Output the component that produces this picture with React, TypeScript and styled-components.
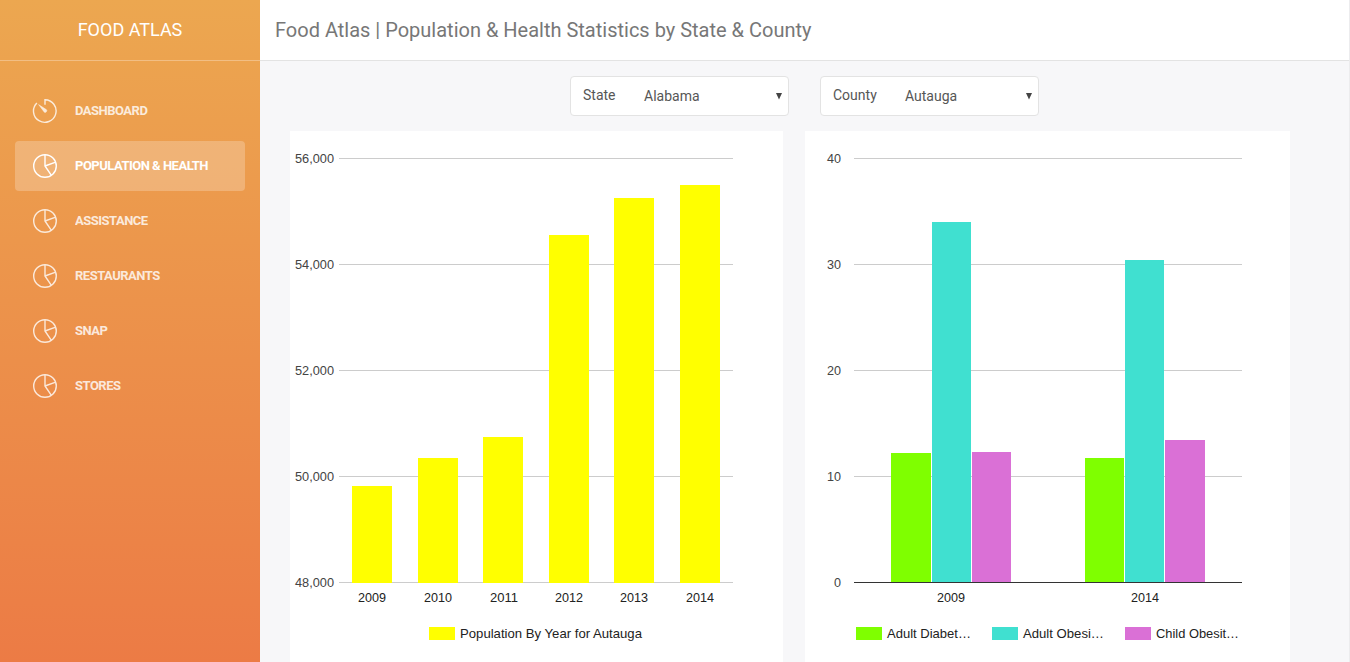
import React from "react";
import styled, { createGlobalStyle } from "styled-components";

const GlobalStyle = createGlobalStyle`
  * { box-sizing: border-box; }
  body {
    margin: 0;
    overflow: hidden;
    font-family: Roboto, "Liberation Sans", sans-serif;
    color: #565656;
  }
`;

const Page = styled.div`
  display: flex;
  width: 1350px;
  height: 662px;
  overflow: hidden;
`;

const Sidebar = styled.aside`
  width: 260px;
  flex: none;
  background: linear-gradient(to bottom, #eca750 0%, #ec7b45 100%);
`;

const Brand = styled.div`
  height: 61px;
  border-bottom: 1px solid rgba(255, 255, 255, 0.3);
  color: #fff;
  font-size: 18px;
  line-height: 60px;
  text-align: center;
`;

const Nav = styled.nav`
  display: flex;
  flex-direction: column;
  gap: 5px;
  padding: 25px 15px 0;
`;

const NavItem = styled.a<{ $active?: boolean }>`
  display: flex;
  align-items: center;
  height: 50px;
  padding-left: 17px;
  border-radius: 4px;
  background: ${(p) => (p.$active ? "rgba(255, 255, 255, 0.23)" : "transparent")};
  color: #fff;
`;

const NavIcon = styled.svg<{ $active?: boolean }>`
  width: 26px;
  height: 26px;
  margin-right: 17px;
  fill: none;
  stroke: #fff;
  stroke-width: 1.4;
  opacity: ${(p) => (p.$active ? 1 : 0.8)};
`;

const NavLabel = styled.span<{ $active?: boolean }>`
  font-size: 13px;
  font-weight: 700;
  line-height: 30px;
  white-space: nowrap;
  letter-spacing: -0.5px;
  opacity: ${(p) => (p.$active ? 1 : 0.8)};
`;

const Main = styled.main`
  flex: 1;
  background: #f7f7f9;
  border-right: 1px solid #ececee;
`;

const Header = styled.header`
  height: 61px;
  padding-left: 15px;
  background: #fff;
  border-bottom: 1px solid #e3e3e3;
`;

const Title = styled.h1`
  margin: 0;
  color: #777;
  font-size: 20px;
  font-weight: 400;
  line-height: 60px;
`;

const Filters = styled.div`
  display: flex;
  gap: 31px;
  padding: 15px 0 15px 310px;
`;

const SelectBox = styled.div`
  display: flex;
  width: 219px;
  height: 40px;
  padding: 0 5px 0 12px;
  background: #fff;
  border: 1px solid #e3e3e3;
  border-radius: 4px;
  font-size: 14px;
  line-height: 36px;
`;

const SelectLabel = styled.span<{ $width: number }>`
  width: ${(p) => p.$width}px;
`;

const SelectValue = styled.span`
  flex: 1;
  padding-top: 1px;
`;

const Arrow = styled.svg`
  width: 8px;
  height: 38px;
  fill: #444;
`;

const Charts = styled.div`
  display: flex;
  gap: 22px;
  padding-left: 30px;
`;

const Card = styled.section<{ $width: number }>`
  width: ${(p) => p.$width}px;
  height: 531px;
  background: #fff;
`;

const Plot = styled.svg`
  display: block;
  font-family: "Liberation Sans", Arial, sans-serif;
  font-size: 13.6px;
`;

const Gauge = () => (
  <>
    <path d="M4.9 4.9A11.3 11.3 0 1 0 13 1.7V6.8" />
    <path d="M6.6 6.6L14.3 11.6a1.5 1.5 0 0 1-2.2 2.3z" fill="#fff" stroke="#fff" strokeWidth={0.5} />
  </>
);

const Pie = () => (
  <>
    <circle cx="13" cy="13" r="11.3" />
    <path d="M13 1.7V13l6.4 9.4M13 13l10.7-3.9" />
  </>
);

const navItems = [
  { label: "DASHBOARD" },
  { label: "POPULATION & HEALTH", active: true },
  { label: "ASSISTANCE" },
  { label: "RESTAURANTS" },
  { label: "SNAP" },
  { label: "STORES" },
];

type Bar = { x: number; w: number; top: number; color: string };
type Label = { x: number; text: string };
type LegendEntry = { x: number; text: string; color: string; width: number };

type ChartProps = {
  width: number;
  ticks: string[];
  tickEnd: number;
  from: number;
  to: number;
  bars: Bar[];
  bottom: number;
  labels: Label[];
  legend: LegendEntry[];
  baseline: string;
};

// Digits advance 7px each and the thousands separator 4px.
const numberWidth = (text: string) =>
  text.split("").reduce((sum, ch) => sum + (ch === "," ? 4 : 7), 0);

const BarChart = ({ width, ticks, tickEnd, from, to, bars, bottom, labels, legend, baseline }: ChartProps) => (
  <Plot width={width} height={531}>
    {ticks.map((t, i) => (
      <g key={t}>
        <rect x={from} y={27 + i * 106} width={to - from} height={1} fill="#ccc" />
        <text
          x={tickEnd - numberWidth(t)}
          y={32 + i * 106}
          fill="#444"
          textLength={numberWidth(t)}
          lengthAdjust="spacingAndGlyphs"
        >
          {t}
        </text>
      </g>
    ))}
    {bars.map((b) => (
      <rect key={b.x} x={b.x} y={b.top} width={b.w} height={bottom - b.top} fill={b.color} />
    ))}
    {baseline && <rect x={from} y={451} width={to - from} height={1} fill={baseline} />}
    {labels.map((l) => (
      <text
        key={l.text}
        x={l.x - 14}
        y={471}
        fill="#222"
        textLength={28}
        lengthAdjust="spacingAndGlyphs"
      >
        {l.text}
      </text>
    ))}
    {legend.map((l) => (
      <g key={l.text}>
        <rect x={l.x} y={496} width={26} height={13} fill={l.color} />
        <text x={l.x + 31} y={507} fill="#222" textLength={l.width} lengthAdjust="spacingAndGlyphs">
          {l.text}
        </text>
      </g>
    ))}
  </Plot>
);

const YELLOW = "#ffff00";
const GREEN = "#7fff00";
const TURQUOISE = "#40e0d0";
const ORCHID = "#da70d6";

const populationBars: Bar[] = [
  { x: 62, w: 40, top: 355, color: YELLOW },
  { x: 128, w: 40, top: 327, color: YELLOW },
  { x: 193, w: 40, top: 306, color: YELLOW },
  { x: 259, w: 40, top: 104, color: YELLOW },
  { x: 324, w: 40, top: 67, color: YELLOW },
  { x: 390, w: 40, top: 54, color: YELLOW },
];

const healthBars: Bar[] = [
  { x: 86, w: 40, top: 322, color: GREEN },
  { x: 127, w: 39, top: 91, color: TURQUOISE },
  { x: 167, w: 39, top: 321, color: ORCHID },
  { x: 280, w: 39, top: 327, color: GREEN },
  { x: 320, w: 39, top: 129, color: TURQUOISE },
  { x: 360, w: 40, top: 309, color: ORCHID },
];

const Select = ({ label, value, labelWidth }: { label: string; value: string; labelWidth: number }) => (
  <SelectBox>
    <SelectLabel $width={labelWidth}>{label}</SelectLabel>
    <SelectValue>{value}</SelectValue>
    <Arrow viewBox="0 0 8 38"><path d="M1 16h6l-3 6.5z" /></Arrow>
  </SelectBox>
);

export default function App() {
  return (
    <Page>
      <GlobalStyle />
      <Sidebar>
        <Brand>FOOD ATLAS</Brand>
        <Nav>
          {navItems.map((item, i) => (
            <NavItem key={item.label} $active={item.active}>
              <NavIcon viewBox="0 0 26 26" $active={item.active}>{i === 0 ? <Gauge /> : <Pie />}</NavIcon>
              <NavLabel $active={item.active}>{item.label}</NavLabel>
            </NavItem>
          ))}
        </Nav>
      </Sidebar>
      <Main>
        <Header>
          <Title>Food Atlas | Population &amp; Health Statistics by State &amp; County</Title>
        </Header>
        <Filters>
          <Select label="State" value="Alabama" labelWidth={61} />
          <Select label="County" value="Autauga" labelWidth={72} />
        </Filters>
        <Charts>
          <Card $width={493}>
            <BarChart
              width={493}
              ticks={["56,000", "54,000", "52,000", "50,000", "48,000"]}
              tickEnd={44}
              from={49}
              to={443}
              bars={populationBars}
              bottom={452}
              baseline=""
              labels={[
                { x: 82, text: "2009" },
                { x: 148, text: "2010" },
                { x: 214, text: "2011" },
                { x: 279, text: "2012" },
                { x: 344, text: "2013" },
                { x: 410, text: "2014" },
              ]}
              legend={[{ x: 139, text: "Population By Year for Autauga", color: YELLOW, width: 182 }]}
            />
          </Card>
          <Card $width={485}>
            <BarChart
              width={485}
              ticks={["40", "30", "20", "10", "0"]}
              tickEnd={36}
              from={49}
              to={437}
              bars={healthBars}
              bottom={451}
              baseline="#333"
              labels={[
                { x: 146, text: "2009" },
                { x: 340, text: "2014" },
              ]}
              legend={[
                { x: 51, text: "Adult Diabet…", color: GREEN, width: 84 },
                { x: 187, text: "Adult Obesi…", color: TURQUOISE, width: 81 },
                { x: 320, text: "Child Obesit…", color: ORCHID, width: 83 },
              ]}
            />
          </Card>
        </Charts>
      </Main>
    </Page>
  );
}
